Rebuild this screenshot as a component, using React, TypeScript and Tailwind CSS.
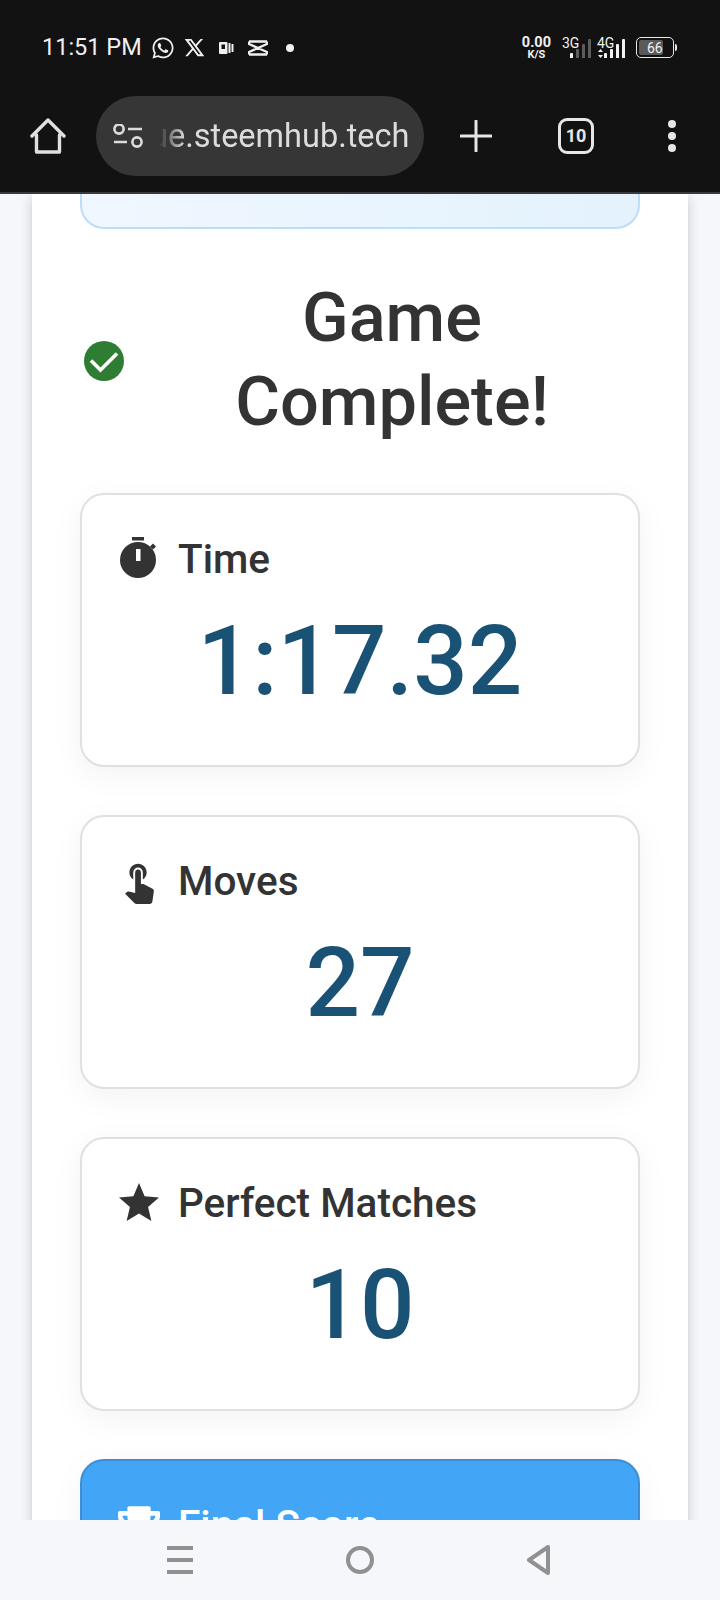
import type { ReactNode } from "react";
import { FaTrophy, FaWhatsapp } from "react-icons/fa";
import { MdStar, MdTouchApp } from "react-icons/md";
import { RiTwitterXLine } from "react-icons/ri";

function Stopwatch() {
  return (
    <svg viewBox="0 0 40 44" className="h-[44px] w-[40px] shrink-0" fill="#333333">
      <rect x="13" y="0" width="12" height="3.5" />
      <circle cx="19" cy="23" r="18" />
      <path d="M31 9.5l3-3 3 3-3 3z" />
      <rect x="17" y="12" width="4.5" height="12" fill="#ffffff" />
    </svg>
  );
}

function CheckBadge() {
  return (
    <svg viewBox="0 0 40 40" className="ml-[4px] mt-[2px] h-[40px] w-[40px] shrink-0">
      <circle cx="20" cy="20" r="20" fill="#2e7d32" />
      <path d="M7 19.5l9.5 9.5L33 12.5" fill="none" stroke="#ffffff" strokeWidth="3.6" />
    </svg>
  );
}

function SignalBars({ lit }: { lit: number }) {
  const levels = [5, 9, 14, 19];
  return (
    <div className="flex items-end gap-[3px]">
      {levels.map((h, i) => (
        <span
          key={i}
          className={`w-[3px] rounded-t-[1px] ${i < lit ? "bg-[#f2f2f2]" : "bg-[#5c5c5c]"}`}
          style={{ height: h }}
        />
      ))}
    </div>
  );
}

function StatusBar() {
  return (
    <div className="flex h-[94px] items-center justify-between pl-[42px] pr-[43px] pt-[1px] text-[#f0f0f0]">
      <div className="flex items-center">
        <span className="text-[23.5px] leading-none">11:51 PM</span>
        <FaWhatsapp className="ml-[9px] h-[24px] w-[24px]" />
        <RiTwitterXLine className="ml-[8px] h-[23px] w-[23px]" />
        {/* slides app glyph */}
        <svg viewBox="0 0 15 14" className="ml-[13px] h-[14px] w-[15px]" fill="#f0f0f0">
          <rect x="0" y="1" width="8.5" height="12" rx="1" />
          <rect x="9.5" y="2" width="2" height="10" rx="0.5" />
          <rect x="12.5" y="3" width="2" height="8" rx="0.5" />
          <rect x="2.5" y="3.5" width="3.5" height="4.5" fill="#121212" />
        </svg>
        {/* clapper glyph */}
        <svg viewBox="0 0 20 16" className="ml-[14px] h-[16px] w-[20px]" fill="none" stroke="#f0f0f0" strokeWidth="2.4">
          <path d="M1 1.5h18M1 14.5h18M1 1.5v2.5l18 8v2.5M19 1.5V4L1 12v2.5" />
        </svg>
        <span className="ml-[18px] h-[8px] w-[8px] rounded-full bg-[#f0f0f0]" />
      </div>
      <div className="flex items-center">
        <div className="flex flex-col items-center font-bold">
          <span className="text-[14.5px] leading-[13px]">0.00</span>
          <span className="text-[11px] leading-[11px]">K/S</span>
        </div>
        <div className="relative ml-[11px] flex h-[20px] w-[29px] items-end justify-end">
          <span className="absolute left-0 top-[-2px] text-[14px] leading-none">3G</span>
          <SignalBars lit={1} />
        </div>
        <div className="relative ml-[6px] flex h-[20px] w-[28px] items-end justify-end">
          <span className="absolute left-0 top-[-2px] text-[14px] leading-none">4G</span>
          <svg viewBox="0 0 5 9" className="absolute bottom-0 left-[1px] h-[9px] w-[5px]" fill="#f2f2f2">
            <path d="M2.5 0 5 3H0zM2.5 9 0 6h5z" />
          </svg>
          <SignalBars lit={4} />
        </div>
        <div className="ml-[11px] flex items-center">
          <div className="flex h-[21px] w-[38px] items-center rounded-[5px] border-[1.5px] border-[#e8e8e8] p-[2px]">
            <div className="flex h-full w-[24px] items-center rounded-[2px] bg-[#5a5a5a]">
              <span className="pl-[8px] text-[14px] leading-none">66</span>
            </div>
          </div>
          <span className="ml-[1px] h-[7px] w-[2px] rounded-r-sm bg-[#e8e8e8]" />
        </div>
      </div>
    </div>
  );
}

function Toolbar() {
  return (
    <div className="flex h-[100px] items-start border-b-2 border-[#3a3a3a] pl-[30px] pt-[2px] text-[#e6e6e6]">
      <svg viewBox="0 0 36 36" className="mt-[22px] h-[36px] w-[36px]" fill="none" stroke="#e0e0e0" strokeWidth="3.4" strokeLinejoin="round" strokeLinecap="round">
        <path d="M2 18 18 2l16 16M6.5 17v17h23V17" />
      </svg>
      <div className="ml-[30px] flex h-[80px] w-[328px] items-center rounded-[40px] bg-[#363636]">
        <svg viewBox="0 0 30 24" className="ml-[17px] h-[24px] w-[30px]" fill="none" stroke="#dcdcdc" strokeWidth="2.6">
          <circle cx="6" cy="5" r="4.6" />
          <path d="M15 5h14M1 18h13" />
          <circle cx="24" cy="18" r="4.6" />
        </svg>
        <div className="ml-[16px] w-[256px] overflow-hidden whitespace-nowrap text-[32.5px] leading-[40px] text-[#dcdcdc] [mask-image:linear-gradient(to_right,transparent_0%,black_26px)]">
          <span className="ml-[-9px]">ue.steemhub.tech</span>
        </div>
      </div>
      <svg viewBox="0 0 32 32" className="ml-[36px] mt-[24px] h-[32px] w-[32px]" stroke="#e6e6e6" strokeWidth="3" strokeLinecap="round">
        <path d="M16 1v30M1 16h30" />
      </svg>
      <div className="ml-[66px] mt-[22px] flex h-[36px] w-[36px] items-center justify-center rounded-[9px] border-[3.5px] border-[#e6e6e6] text-[18px] font-bold leading-none">
        10
      </div>
      <div className="ml-[74px] mt-[24px] flex flex-col gap-[4px]">
        <span className="h-[8px] w-[8px] rounded-full bg-[#e6e6e6]" />
        <span className="h-[8px] w-[8px] rounded-full bg-[#e6e6e6]" />
        <span className="h-[8px] w-[8px] rounded-full bg-[#e6e6e6]" />
      </div>
    </div>
  );
}

function StatCard({ icon, label, value }: { icon: ReactNode; label: string; value: string }) {
  return (
    <div className="h-[274px] rounded-[24px] border-2 border-[#e0e0e0] bg-white px-[36px] pt-[40px] shadow-[0_8px_32px_rgba(0,0,0,0.05)]">
      <div className="flex h-[48px] items-center">
        <div className="flex w-[42px] justify-center">{icon}</div>
        <span className="ml-[18px] text-[40.5px] font-medium leading-none text-[#333333]">{label}</span>
      </div>
      <div className="mt-[22px] text-center text-[96px] font-medium leading-[112px] text-[#1a5276]">{value}</div>
    </div>
  );
}

export default function App() {
  return (
    <div className="flex h-[1600px] w-[720px] flex-col overflow-hidden bg-[#f5f7fb] font-['Roboto',sans-serif]">
      <div className="bg-[#121212]">
        <StatusBar />
        <Toolbar />
      </div>
      <div className="min-h-0 flex-1 overflow-hidden px-[32px]">
        <div className="bg-white px-[48px] shadow-[0_4px_12px_rgba(0,0,0,0.2)]">
          <div className="h-[35px] rounded-b-[24px] border-x-2 border-b-2 border-[#bbdefb] bg-gradient-to-r from-[#f0f7ff] to-[#e3f2fd]" />
          <div className="mt-[47px] flex items-center">
            <CheckBadge />
            <h2 className="ml-[20px] flex-1 text-center text-[68.5px] font-medium leading-[84px] text-[#333333]">
              Game Complete!
            </h2>
          </div>
          <div className="mt-[49px] flex flex-col gap-[48px]">
            <StatCard icon={<Stopwatch />} label="Time" value="1:17.32" />
            <StatCard icon={<MdTouchApp className="h-[46px] w-[46px] shrink-0 text-[#333333]" />} label="Moves" value="27" />
            <StatCard icon={<MdStar className="h-[48px] w-[48px] shrink-0 text-[#333333]" />} label="Perfect Matches" value="10" />
            <div className="h-[274px] rounded-[24px] border-2 border-[#3d8ed4] bg-[#42a5f5] px-[36px] pt-[40px] shadow-[0_8px_32px_rgba(0,0,0,0.05)]">
              <div className="flex h-[48px] items-center text-white">
                <div className="flex w-[42px] justify-center">
                  <FaTrophy className="h-[38px] w-[42px] shrink-0" />
                </div>
                <span className="ml-[18px] text-[40.5px] font-medium leading-none">Final Score</span>
              </div>
            </div>
          </div>
        </div>
      </div>
      <div className="flex h-[80px] shrink-0 items-center justify-between bg-[#f5f7fb] pl-[167px] pr-[170px]">
        <div className="flex h-[28px] w-[26px] flex-col justify-between">
          <span className="h-[4px] bg-[#919191]" />
          <span className="h-[4px] bg-[#919191]" />
          <span className="h-[4px] bg-[#919191]" />
        </div>
        <span className="h-[28px] w-[28px] rounded-full border-[4px] border-[#919191]" />
        <svg viewBox="0 0 23 30" className="h-[30px] w-[23px]" fill="none" stroke="#919191" strokeWidth="4" strokeLinejoin="round">
          <path d="M21 2v26L2 15z" />
        </svg>
      </div>
    </div>
  );
}
